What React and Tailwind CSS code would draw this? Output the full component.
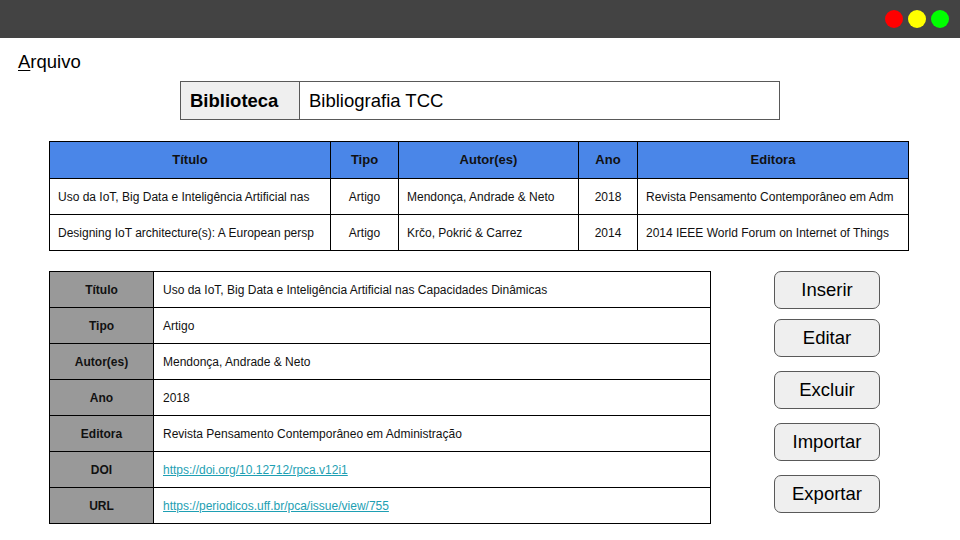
import React from "react";

const font = { fontFamily: '"Liberation Sans", Arial, sans-serif' };

const rows = [
  ["Uso da IoT, Big Data e Inteligência Artificial nas", "Artigo", "Mendonça, Andrade & Neto", "2018", "Revista Pensamento Contemporâneo em Adm"],
  ["Designing IoT architecture(s): A European persp", "Artigo", "Krčo, Pokrić & Carrez", "2014", "2014 IEEE World Forum on Internet of Things"],
];

const details = [
  ["Título", "Uso da IoT, Big Data e Inteligência Artificial nas Capacidades Dinâmicas"],
  ["Tipo", "Artigo"],
  ["Autor(es)", "Mendonça, Andrade & Neto"],
  ["Ano", "2018"],
  ["Editora", "Revista Pensamento Contemporâneo em Administração"],
  ["DOI", "https://doi.org/10.12712/rpca.v12i1", true],
  ["URL", "https://periodicos.uff.br/pca/issue/view/755", true],
];

const buttons = ["Inserir", "Editar", "Excluir", "Importar", "Exportar"];

export default function App() {
  return (
    <div className="w-[960px] h-[540px] bg-white overflow-hidden text-[#111]" style={font}>
      <div className="h-[38px] bg-[#434343] flex items-center justify-end pr-[11px] gap-[5px]">
        <div className="w-[18px] h-[18px] rounded-full bg-[#ff0000]" />
        <div className="w-[18px] h-[18px] rounded-full bg-[#ffff00]" />
        <div className="w-[18px] h-[18px] rounded-full bg-[#00ff00]" />
      </div>

      <div className="pl-[18px] mt-[13px] text-[18.5px] leading-[21px] text-black">
        <span className="underline underline-offset-2">A</span>rquivo
      </div>

      <div className="ml-[180px] mt-[9px] w-[600px] h-[39px] border border-[#595959] flex text-[18.5px]">
        <div className="w-[119px] bg-[#efefef] border-r border-[#595959] flex items-center pl-[9px] font-bold text-black">
          Biblioteca
        </div>
        <div className="flex-1 flex items-center pl-[9px] text-black">Bibliografia TCC</div>
      </div>

      <table className="ml-[49px] mt-[21px] border-collapse text-[12px] table-fixed" style={{ width: 859 }}>
        <colgroup>
          <col style={{ width: 281 }} />
          <col style={{ width: 68 }} />
          <col style={{ width: 180 }} />
          <col style={{ width: 59 }} />
          <col style={{ width: 271 }} />
        </colgroup>
        <thead>
          <tr className="h-[37px] bg-[#4a86e8] text-[13px] font-bold text-[#111]">
            {["Título", "Tipo", "Autor(es)", "Ano", "Editora"].map((h) => (
              <th key={h} className="border border-black text-center font-bold">{h}</th>
            ))}
          </tr>
        </thead>
        <tbody>
          {rows.map((r, i) => (
            <tr key={i} className="h-[36px]">
              <td className="border border-black pl-[8px] whitespace-nowrap overflow-hidden">{r[0]}</td>
              <td className="border border-black text-center">{r[1]}</td>
              <td className="border border-black pl-[8px] whitespace-nowrap overflow-hidden">{r[2]}</td>
              <td className="border border-black text-center">{r[3]}</td>
              <td className="border border-black pl-[8px] whitespace-nowrap overflow-hidden">{r[4]}</td>
            </tr>
          ))}
        </tbody>
      </table>

      <div className="flex mt-[20px]">
        <table className="ml-[49px] border-collapse text-[12px] table-fixed" style={{ width: 661 }}>
          <colgroup>
            <col style={{ width: 104 }} />
            <col style={{ width: 557 }} />
          </colgroup>
          <tbody>
            {details.map(([k, v, link]) => (
              <tr key={k} className="h-[36px]">
                <td className="border border-black bg-[#999999] text-center font-bold">{k}</td>
                <td className="border border-black pl-[9px] whitespace-nowrap">
                  {link ? <span className="text-[#1e9fb3] underline">{v}</span> : v}
                </td>
              </tr>
            ))}
          </tbody>
        </table>

        <div className="ml-[63px] flex flex-col gap-[10px]">
          {buttons.map((b, i) => (
            <div
              key={b}
              className={`w-[106px] h-[38px] rounded-[7px] border border-[#595959] bg-[#efefef] flex items-center justify-center text-[18.5px] text-black ${i >= 2 ? "mt-[4px]" : ""}`}
            >
              {b}
            </div>
          ))}
        </div>
      </div>
    </div>
  );
}
